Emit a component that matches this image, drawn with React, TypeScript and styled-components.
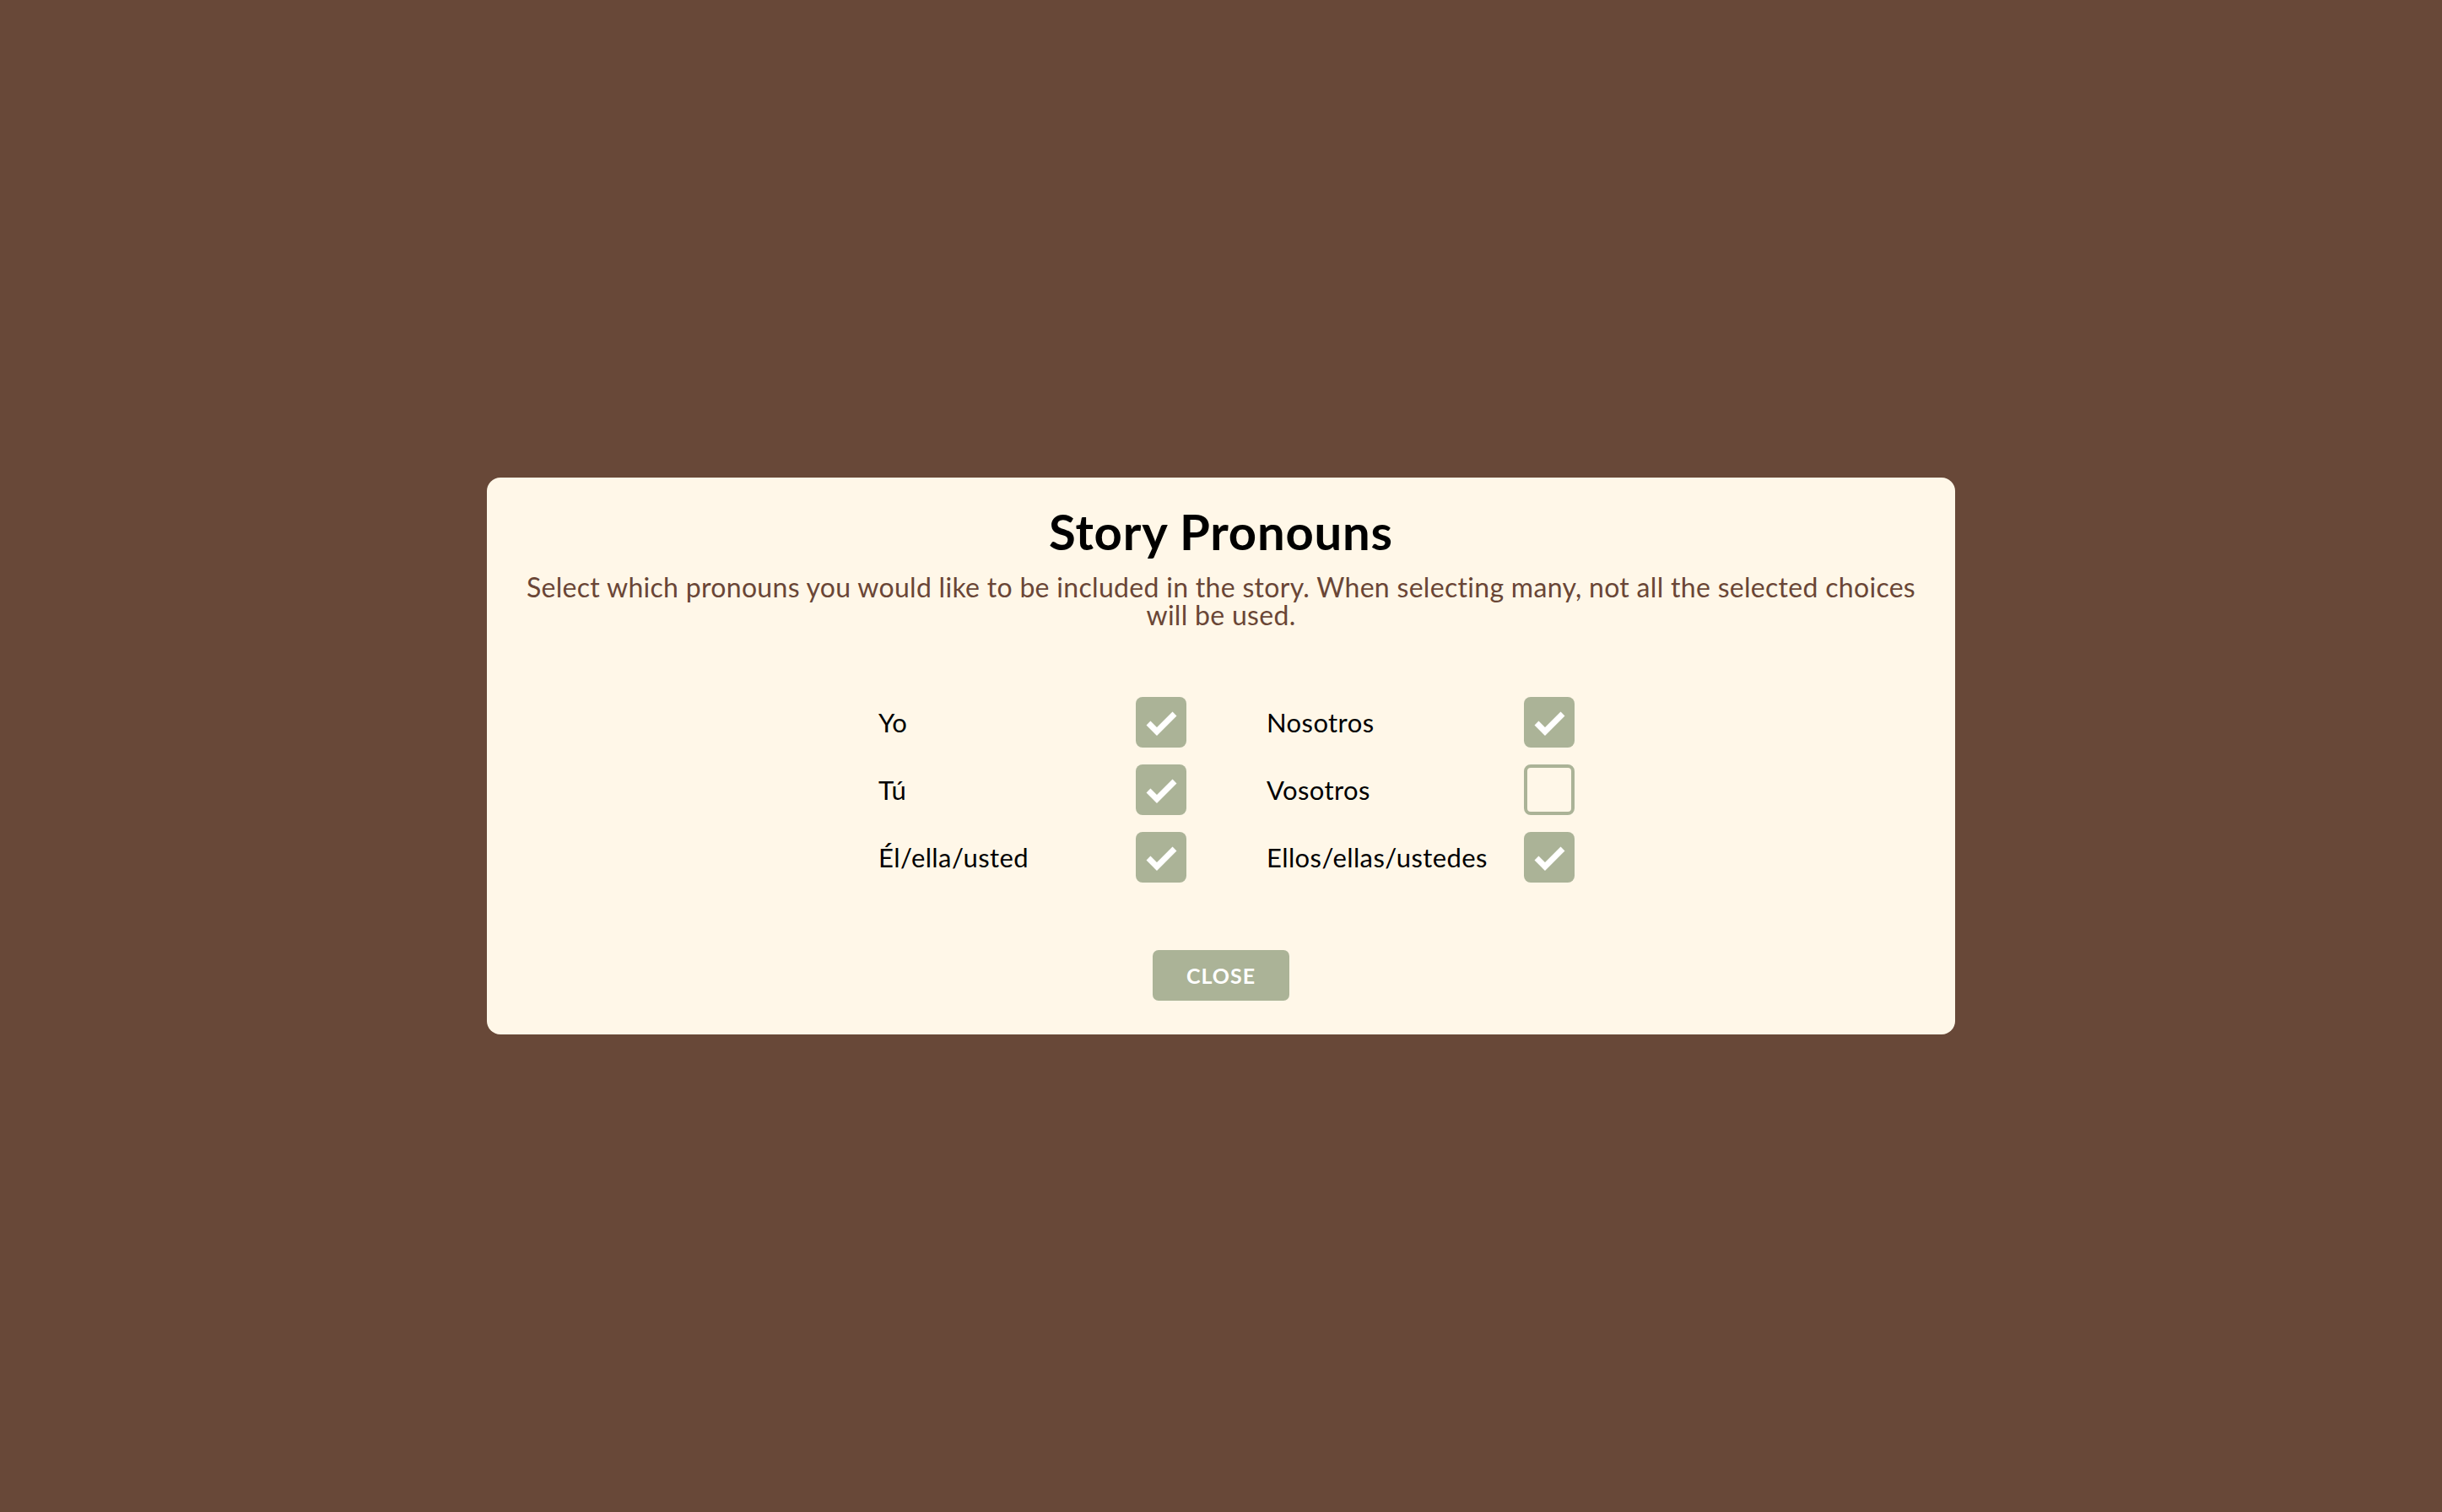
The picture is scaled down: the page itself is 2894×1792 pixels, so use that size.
import React, { useState } from "react";
import styled, { createGlobalStyle } from "styled-components";

const GlobalStyle = createGlobalStyle`
  html, body {
    margin: 0;
    padding: 0;
    background: #684838;
  }
  body {
    font-family: Lato, "Open Sans", sans-serif;
  }
  * { box-sizing: border-box; }
`;

const Page = styled.div`
  width: 100%;
  min-height: 100vh;
  display: flex;
  align-items: center;
  justify-content: center;
  background: #684838;
`;

const Modal = styled.div`
  width: 1740px;
  background: #fff7e8;
  border-radius: 16px;
  padding: 32px 30px 40px;
  display: flex;
  flex-direction: column;
  align-items: center;
`;

const Title = styled.h2`
  margin: 0;
  font-size: 58px;
  line-height: 64px;
  font-weight: 700;
  color: #000;
  letter-spacing: 0.8px;
`;

const Subtitle = styled.p`
  margin: 17px 0 0;
  font-size: 32px;
  line-height: 33px;
  color: #6a4636;
  text-align: center;
  letter-spacing: 0.3px;
`;

const Options = styled.div`
  margin-top: 81px;
  padding-left: 13px;
  display: flex;
  gap: 95px;
`;

const Column = styled.div`
  width: 365px;
  display: flex;
  flex-direction: column;
  gap: 20px;
`;

const OptionRow = styled.label`
  height: 60px;
  display: flex;
  align-items: center;
  justify-content: space-between;
  cursor: pointer;
`;

const Label = styled.span`
  font-size: 31px;
  color: #000;
  letter-spacing: 0.4px;
`;

const Box = styled.span<{ $checked: boolean }>`
  width: 60px;
  height: 60px;
  border-radius: 8px;
  display: flex;
  align-items: center;
  justify-content: center;
  background: ${(p) => (p.$checked ? "#abb397" : "transparent")};
  border: ${(p) => (p.$checked ? "none" : "4px solid #abb397")};
`;

const Footer = styled.div`
  margin-top: 80px;
  display: flex;
  justify-content: center;
`;

const CloseButton = styled.button`
  width: 162px;
  height: 60px;
  border: none;
  border-radius: 7px;
  background: #abb397;
  color: #fff;
  font-family: Lato, "Open Sans", sans-serif;
  font-weight: 700;
  font-size: 25px;
  letter-spacing: 1px;
  cursor: pointer;
`;

const Check = () => (
  <svg width="60" height="60" viewBox="0 0 60 60" aria-hidden="true">
    <polyline
      points="15,31 25,41 46,20"
      fill="none"
      stroke="#ffffff"
      strokeWidth="7"
      strokeLinecap="butt"
      strokeLinejoin="miter"
    />
  </svg>
);

const initial: [string, boolean][][] = [
  [
    ["Yo", true],
    ["Tú", true],
    ["Él/ella/usted", true],
  ],
  [
    ["Nosotros", true],
    ["Vosotros", false],
    ["Ellos/ellas/ustedes", true],
  ],
];

export default function App() {
  const [cols, setCols] = useState(initial);

  const toggle = (c: number, r: number) => {
    setCols((prev) =>
      prev.map((col, ci) =>
        col.map((row, ri) => (ci === c && ri === r ? [row[0], !row[1]] : row)) as [string, boolean][]
      )
    );
  };

  return (
    <>
      <GlobalStyle />
      <Page>
        <Modal>
          <Title>Story Pronouns</Title>
          <Subtitle>
            Select which pronouns you would like to be included in the story. When selecting many, not all the
            selected choices will be used.
          </Subtitle>
          <Options>
            {cols.map((col, c) => (
              <Column key={c}>
                {col.map(([name, checked], r) => (
                  <OptionRow key={name} onClick={() => toggle(c, r)}>
                    <Label>{name}</Label>
                    <Box $checked={checked}>{checked && <Check />}</Box>
                  </OptionRow>
                ))}
              </Column>
            ))}
          </Options>
          <Footer>
            <CloseButton>CLOSE</CloseButton>
          </Footer>
        </Modal>
      </Page>
    </>
  );
}
